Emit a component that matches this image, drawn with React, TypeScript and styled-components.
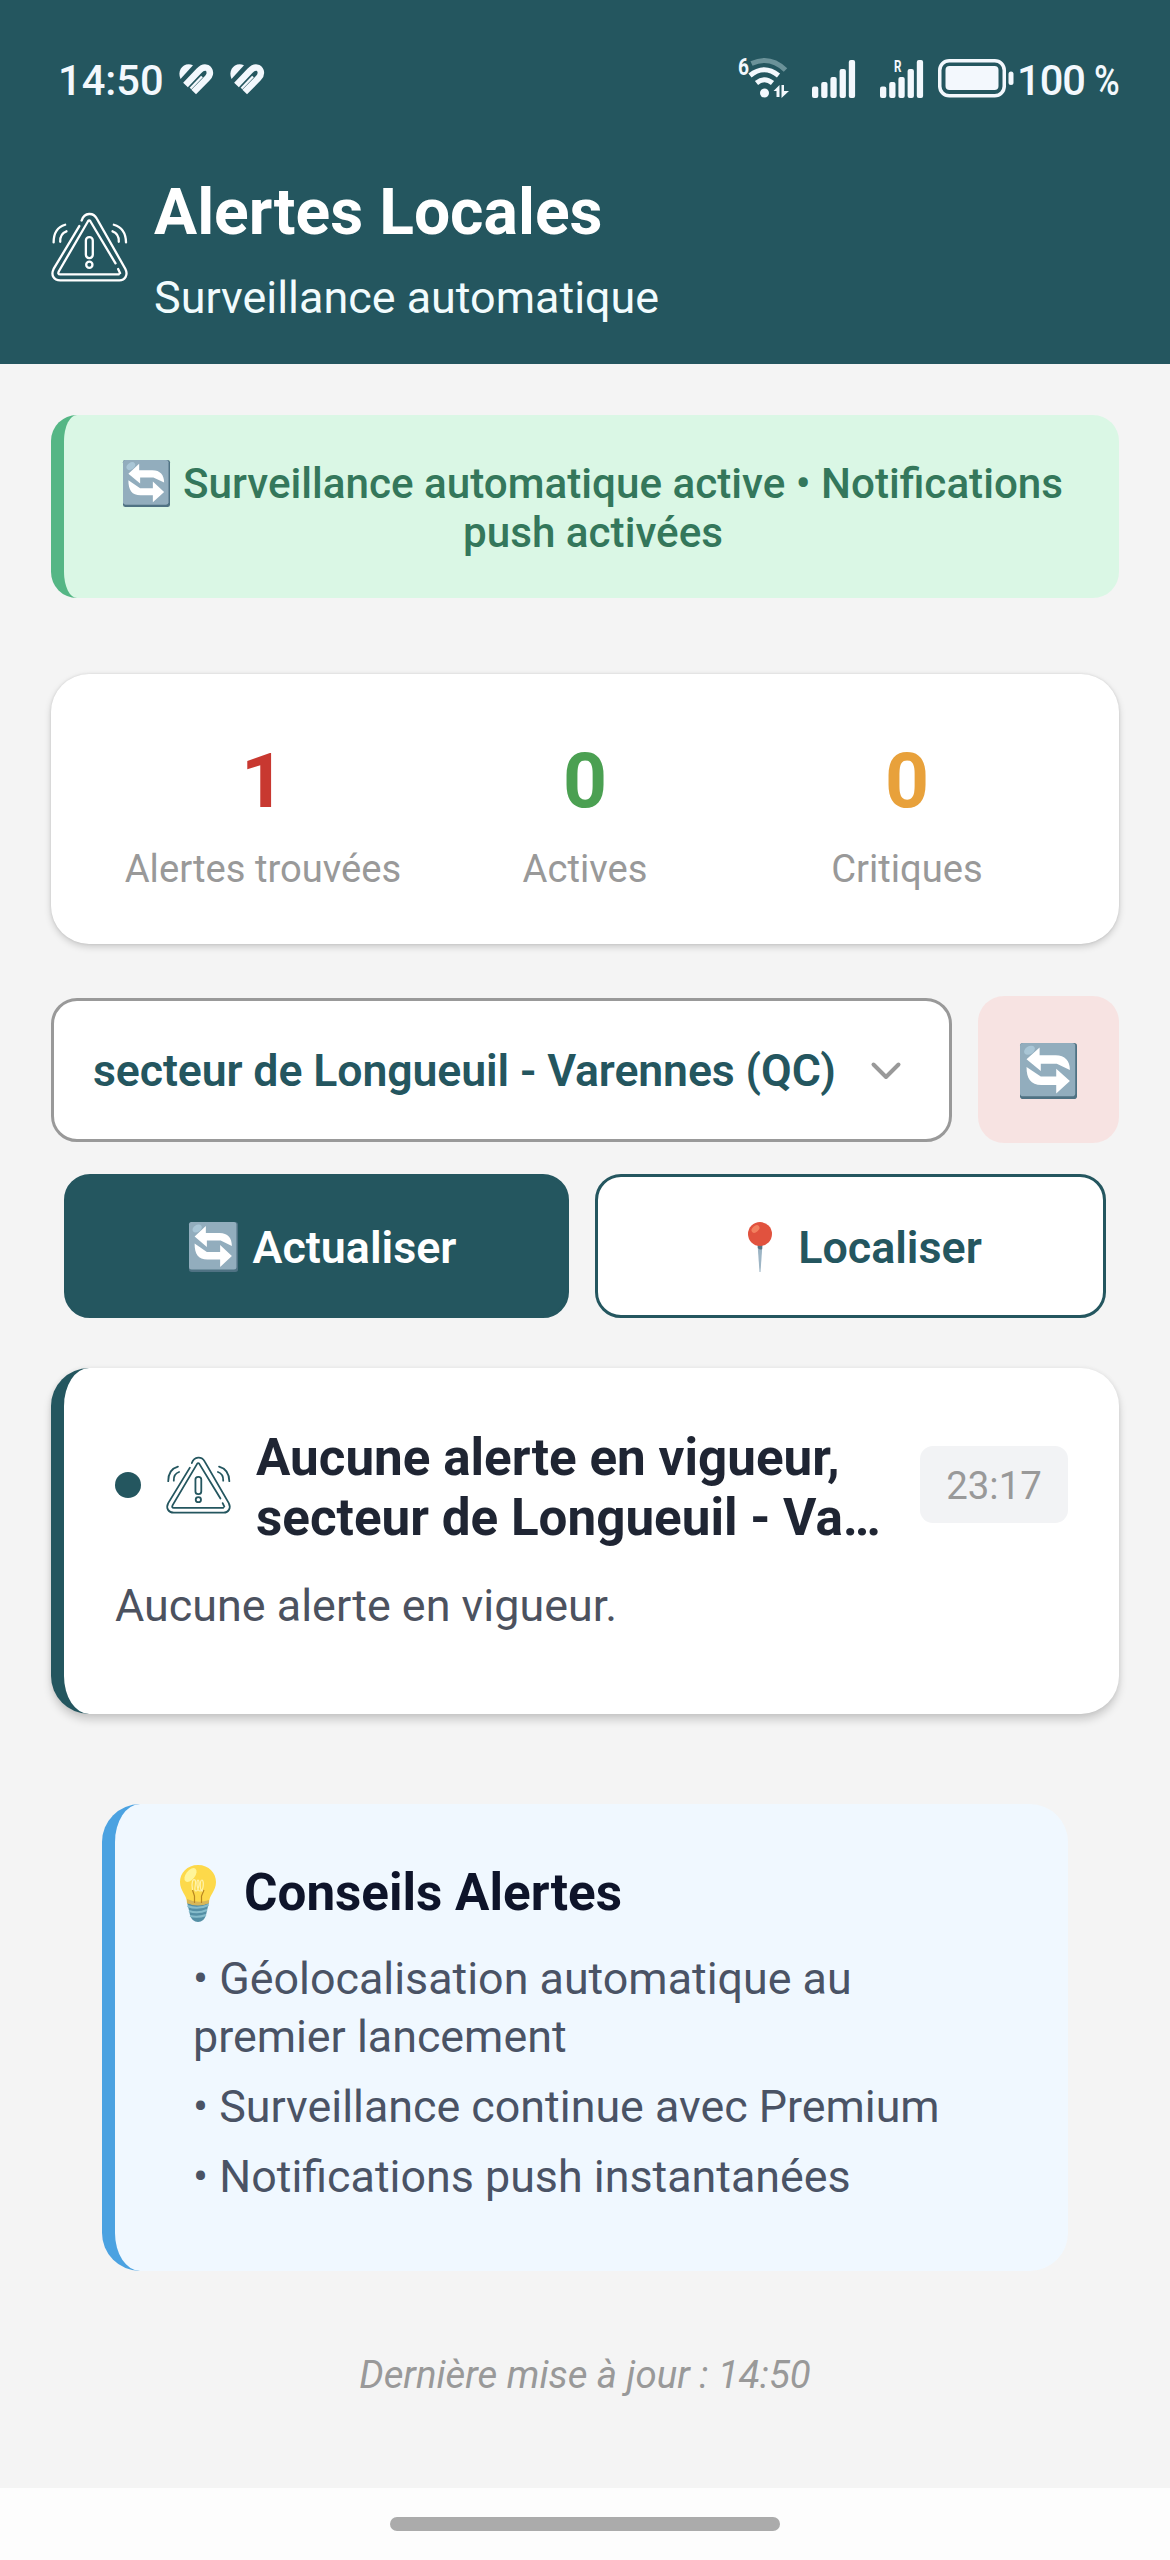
import React from 'react';
import styled, { createGlobalStyle } from 'styled-components';

const teal = '#24565f';

const GlobalStyle = createGlobalStyle`
  *, *::before, *::after { box-sizing: border-box; }
  html, body { margin: 0; padding: 0; }
  body { background: #f4f4f4; font-family: Roboto, 'Noto Sans', sans-serif; }
  p, h1, h2, ul { margin: 0; padding: 0; font-weight: inherit; }
  button { font-family: inherit; padding: 0; margin: 0; }
  svg { display: block; flex: none; overflow: visible; }
`;

const Screen = styled.div`
  width: 1170px;
  height: 2560px;
  display: flex;
  flex-direction: column;
  background: #f4f4f4;
  overflow: hidden;
`;

const Header = styled.header`
  height: 364px;
  flex: none;
  background: ${teal};
  color: #fff;
  display: flex;
  flex-direction: column;
`;

const StatusBar = styled.div`
  height: 160px;
  padding: 0 51px 0 58px;
  display: flex;
  justify-content: space-between;
  color: #f3f8fd;
`;

const StatusGroup = styled.div`
  display: flex;
  align-items: flex-start;
`;

const StatusText = styled.span<{ $ml?: number; $tight?: boolean }>`
  margin-top: 56px;
  margin-left: ${(p) => p.$ml ?? 0}px;
  font-size: 41.6px;
  line-height: 49px;
  font-weight: 500;
  letter-spacing: ${(p) => (p.$tight ? '-1px' : 'normal')};
  white-space: nowrap;
`;

const Percent = styled.span`
  display: inline-block;
  transform: scaleX(0.84);
  transform-origin: left;
  margin-right: -5px;
`;

const StatusIcon = styled.span<{ $ml: number; $mt: number }>`
  margin: ${(p) => p.$mt}px 0 0 ${(p) => p.$ml}px;
`;

const TitleRow = styled.div`
  display: flex;
  align-items: center;
  gap: 26px;
  padding: 15px 51px 0;
`;

const HeaderIcon = styled.span`
  margin-bottom: 6px;
`;

const TitleText = styled.div`
  display: flex;
  flex-direction: column;
  gap: 21px;
`;

const Title = styled.h1`
  font-size: 64.2px;
  line-height: 75px;
  font-weight: 700;
`;

const Subtitle = styled.p`
  font-size: 44.9px;
  line-height: 53px;
  color: #f1fbfd;
`;

const Main = styled.main`
  flex: 1;
  display: flex;
  flex-direction: column;
  padding: 51px 51px 0;
`;

const Banner = styled.div`
  height: 183px;
  padding: 44px 40px 0 43px;
  border-left: 13px solid #55b685;
  border-radius: 26px;
  background: #daf7e5;
  color: #34775b;
  font-size: 42.2px;
  line-height: 49px;
  font-weight: 500;
  text-align: center;
  white-space: nowrap;
  display: flex;
  flex-direction: column;
  align-items: center;
`;

const IconLine = styled.span<{ $gap: number }>`
  display: flex;
  align-items: center;
  gap: ${(p) => p.$gap}px;
`;

const Stats = styled.section`
  height: 270px;
  margin-top: 76px;
  padding: 0 51px;
  border-radius: 38px;
  background: #fff;
  box-shadow: 0 3px 7px rgba(0, 0, 0, 0.17), 0 0 3px rgba(0, 0, 0, 0.1);
  display: grid;
  grid-template-columns: repeat(3, 1fr);
`;

const Stat = styled.div`
  padding-top: 62px;
  display: flex;
  flex-direction: column;
  align-items: center;
  gap: 21px;
`;

const StatValue = styled.span<{ $color: string }>`
  font-size: 76.8px;
  line-height: 90px;
  font-weight: 700;
  color: ${(p) => p.$color};
`;

const StatLabel = styled.span`
  font-size: 38.2px;
  line-height: 45px;
  color: #999;
  white-space: nowrap;
`;

const SelectorRow = styled.div`
  margin-top: 52px;
  height: 147px;
  display: flex;
  align-items: center;
  gap: 26px;
`;

const Select = styled.button`
  flex: 1;
  height: 144px;
  padding: 3px 48px 0 39px;
  border: 3px solid #999;
  border-radius: 26px;
  background: #fff;
  color: ${teal};
  font-size: 44.6px;
  font-weight: 600;
  letter-spacing: -0.1px;
  white-space: nowrap;
  display: flex;
  align-items: center;
  justify-content: space-between;
`;

const RefreshButton = styled.button`
  width: 141px;
  height: 147px;
  border: 0;
  border-radius: 26px;
  padding-top: 3px;
  background: #f7e3e2;
  display: flex;
  align-items: center;
  justify-content: center;
`;

const Actions = styled.div`
  margin: 31px 13px 0;
  display: flex;
  gap: 26px;
`;

const ActionButton = styled.button<{ $outlined?: boolean }>`
  flex: none;
  width: ${(p) => (p.$outlined ? 511 : 505)}px;
  height: 144px;
  padding: 2px 0 0 ${(p) => (p.$outlined ? 29 : 12)}px;
  border: 3px solid ${teal};
  border-radius: 26px;
  background: ${(p) => (p.$outlined ? '#fff' : teal)};
  color: ${(p) => (p.$outlined ? teal : '#fff')};
  font-size: 44.8px;
  font-weight: 600;
  display: flex;
  align-items: center;
  justify-content: center;
  gap: ${(p) => (p.$outlined ? 26 : 15)}px;
`;

const AlertCard = styled.article`
  height: 346px;
  margin-top: 50px;
  padding: 53px 51px 0 51px;
  border-left: 13px solid ${teal};
  border-radius: 38px;
  background: #fff;
  box-shadow: 0 6px 9px rgba(0, 0, 0, 0.17), 0 0 5px rgba(0, 0, 0, 0.07);
`;

const AlertHead = styled.div`
  display: flex;
  align-items: center;
`;

const Dot = styled.span`
  width: 26px;
  height: 26px;
  border-radius: 50%;
  background: ${teal};
  margin-right: 25px;
`;

const AlertTitle = styled.h2`
  flex: 1;
  min-width: 0;
  margin-left: 25px;
  padding-top: 7px;
  font-size: 51.2px;
  line-height: 60px;
  font-weight: 700;
  color: #1f2533;
  white-space: nowrap;
`;

const TimeBadge = styled.span`
  height: 77px;
  width: 148px;
  border-radius: 13px;
  background: #f2f3f5;
  color: #999;
  font-size: 38.4px;
  line-height: 80px;
  text-align: center;
`;

const AlertBody = styled.p`
  margin-top: 29px;
  font-size: 44.9px;
  line-height: 58px;
  color: #4c525f;
`;

const Tips = styled.section`
  height: 467px;
  margin: 90px 51px 0;
  padding: 59px 51px 0 65px;
  border-left: 13px solid #4ba2e1;
  border-radius: 38px;
  background: #f0f8ff;
`;

const TipsTitle = styled.h2`
  font-size: 51.2px;
  line-height: 60px;
  font-weight: 700;
  color: #0e142a;
  display: flex;
  align-items: center;
  gap: 28px;
`;

const TipList = styled.ul`
  list-style: none;
  margin: 27px 0 0 13px;
  display: flex;
  flex-direction: column;
  gap: 12.8px;
`;

const Tip = styled.li`
  font-size: 44.8px;
  line-height: 57.6px;
  color: #4a5365;
`;

const Updated = styled.p`
  margin-top: 80px;
  text-align: center;
  font-size: 38.4px;
  line-height: 48px;
  font-style: italic;
  color: #999;
`;

const NavBar = styled.footer`
  height: 72px;
  flex: none;
  background: #fdfdfd;
  display: flex;
  justify-content: center;
  padding-top: 29px;
`;

const Handle = styled.span`
  width: 390px;
  height: 14px;
  border-radius: 7px;
  background: #ababab;
`;

const AlertIcon = ({ width, height, color, stroke = 7 }: { width: number; height: number; color: string; stroke?: number }) => (
  <svg width={width} height={height} viewBox="62 92 234 214" preserveAspectRatio="none" fill="none" stroke={color} strokeWidth={stroke} strokeLinecap="round">
    <path d="M155 118C164 92 191 93 201 112L288 266C297 284 287 301 270 301H90C70 301 61 284 70 266L148 135" />
    <path d="M272 279L266 266M258 249L182 121Q178 115 174 121L86 273Q81 283 90 283H268" />
    <path d="M105 131Q70 141 70 185M109 151Q89 158 90 183M253 131Q289 141 290 185M249 151Q269 158 268 183" />
    <rect x="168" y="169" width="21" height="64" rx="10" />
    <circle cx="178.500" cy="253" r="9.500" />
  </svg>
);

const RefreshGlyph = ({ width, height }: { width: number; height: number }) => (
  <svg width={width} height={height} viewBox="0 0 48 50" preserveAspectRatio="none">
    <rect width="48" height="50" rx="2.500" fill="#4f7283" />
    <rect width="46.500" height="47.500" rx="2.500" fill="#92adbd" />
    <ellipse cx="8" cy="6.500" rx="5" ry="3.500" transform="rotate(-35 8 6.500)" fill="#a9c6d6" />
    <path d="M5.500 14.500L16.500 4V11H30C38 11 42 16 42 24L31 18.500H17.500V25Z" fill="#fff" />
    <path d="M42 34L30.500 45V37.500H18C9 37.500 5.500 32 5.500 21.500L17.500 30H30.500V23Z" fill="#fff" />
  </svg>
);

const PinGlyph = () => (
  <svg width="24" height="50" viewBox="0 0 24 50">
    <path d="M9.500 22H14.500L12.500 50H11.500Z" fill="#9db5c5" />
    <path d="M9.800 23H14.200V27Q12 28.500 9.800 26Z" fill="#587485" />
    <circle cx="12" cy="12" r="12" fill="#e1523e" />
    <ellipse cx="7.500" cy="7" rx="4.500" ry="3" transform="rotate(-42 7.500 7)" fill="#f2805f" />
  </svg>
);

const BulbGlyph = () => (
  <svg width="36" height="57" viewBox="0 0 36 57">
    <path d="M7 37H29L26 50Q24 57 18 57Q12 57 10 50Z" fill="#548fa5" />
    <path d="M7.500 41Q18 45 28.500 40M9 46Q18 49 27 45M10 51Q18 53 26 50" stroke="#86bccb" strokeWidth="2" fill="none" />
    <path d="M18 0C7 0 0 8 0 17C0 26 7 30 7 38Q18 42 29 38C29 30 36 26 36 17C36 8 29 0 18 0Z" fill="#fdd94a" />
    <path d="M7 34Q18 39 29 35V38Q18 43 7 38Z" fill="#d7b658" />
    <ellipse cx="10.500" cy="10" rx="4.500" ry="8" transform="rotate(38 10.500 10)" fill="#fff59a" />
    <path d="M14.500 38V31L12.500 25M21.500 38V31L24 25" stroke="#b98620" strokeWidth="1.200" fill="none" />
    <path d="M12.500 25C11 18 13 13 15 15C17 17 13 26 16 26C19 26 20 15 18 15C16 15 17 26 20 26C24 26 24 15 22 15C20 15 19 26 23 26" stroke="#fff3ad" strokeWidth="1.200" fill="none" />
  </svg>
);

const HeartGlyph = () => (
  <svg width="35" height="31" viewBox="0 0 35 31" fill="none" stroke="#f3f8fd">
    <path d="M1.500 15C-2.500 6 5-2.500 14 1.300Z" fill="#f3f8fd" stroke="none" />
    <path d="M6.500 21L20 6.800C25 1.500 29.500 3.500 30.600 7C31.500 10 30.500 12 28.500 14L14.700 28" strokeWidth="6.500" />
    <path d="M11.500 24.500L23 12.500" strokeWidth="2.500" />
  </svg>
);

const WifiGlyph = () => (
  <svg width="52" height="43" viewBox="0 0 52 43" fill="none" stroke="#f3f8fd">
    <path d="M13.500 6.500Q32-2 47.500 13" stroke="#6b9299" strokeWidth="5" />
    <path d="M12 18.500Q26 7 40.500 18.500" strokeWidth="5" />
    <path d="M18.500 26Q26.500 19.500 34.500 26" strokeWidth="5" />
    <circle cx="26.500" cy="36" r="4.500" fill="#f3f8fd" stroke="none" />
    <path d="M35.500 34L41.500 28V40H38.500V34ZM43.500 28H46V34H51L43.500 41Z" fill="#f3f8fd" stroke="none" />
    <text x="0" y="17.500" fontSize="23" fontWeight="700" fontFamily="Roboto, sans-serif" textLength="11" lengthAdjust="spacingAndGlyphs" fill="#f3f8fd" stroke="none">6</text>
  </svg>
);

const bars = [11.5, 16, 21, 29, 38];

const SignalGlyph = ({ roaming }: { roaming?: boolean }) => (
  <svg width="44" height="39" viewBox="0 0 44 39" fill="#f3f8fd">
    {bars.map((h, i) => (
      <rect key={h} x={i * 9.2} y={38 - h} width="6.300" height={h} rx="2" />
    ))}
    {roaming && (
      <text x="14" y="11.500" fontSize="16.500" fontWeight="700" fontFamily="Roboto, sans-serif" textLength="7.500" lengthAdjust="spacingAndGlyphs">R</text>
    )}
  </svg>
);

const BatteryGlyph = () => (
  <svg width="76" height="39" viewBox="0 0 76 39" fill="none">
    <rect x="1.750" y="1.750" width="64.500" height="35" rx="9.500" stroke="#f3f8fd" strokeWidth="3.500" />
    <rect x="7.500" y="7" width="53" height="24" rx="4" fill="#f3f8fd" />
    <rect x="70.500" y="12.500" width="5" height="13.500" rx="2.500" fill="#f3f8fd" />
  </svg>
);

const stats = [
  { value: 1, label: 'Alertes trouvées', color: '#c83830' },
  { value: 0, label: 'Actives', color: '#4ba052' },
  { value: 0, label: 'Critiques', color: '#e8a13b' },
];

export default function App() {
  return (
    <Screen>
      <GlobalStyle />
      <Header>
        <StatusBar>
          <StatusGroup>
            <StatusText>14:50</StatusText>
            <StatusIcon $ml={15} $mt={64}><HeartGlyph /></StatusIcon>
            <StatusIcon $ml={16} $mt={64}><HeartGlyph /></StatusIcon>
          </StatusGroup>
          <StatusGroup>
            <StatusIcon $ml={0} $mt={57}><WifiGlyph /></StatusIcon>
            <StatusIcon $ml={22} $mt={60}><SignalGlyph /></StatusIcon>
            <StatusIcon $ml={24} $mt={60}><SignalGlyph roaming /></StatusIcon>
            <StatusIcon $ml={14} $mt={59}><BatteryGlyph /></StatusIcon>
            <StatusText $ml={3} $tight>100 <Percent>%</Percent></StatusText>
          </StatusGroup>
        </StatusBar>
        <TitleRow>
          <HeaderIcon><AlertIcon width={77} height={70} color="#fff" /></HeaderIcon>
          <TitleText>
            <Title>Alertes Locales</Title>
            <Subtitle>Surveillance automatique</Subtitle>
          </TitleText>
        </TitleRow>
      </Header>
      <Main>
        <Banner>
          <IconLine $gap={13}>
            <RefreshGlyph width={47} height={47} />
            <span>Surveillance automatique active • Notifications</span>
          </IconLine>
          <span>push activées</span>
        </Banner>
        <Stats>
          {stats.map((s) => (
            <Stat key={s.label}>
              <StatValue $color={s.color}>{s.value}</StatValue>
              <StatLabel>{s.label}</StatLabel>
            </Stat>
          ))}
        </Stats>
        <SelectorRow>
          <Select>
            <span>secteur de Longueuil - Varennes (QC)</span>
            <svg width="30" height="18" viewBox="0 0 30 18" fill="none" stroke="#999" strokeWidth="4" strokeLinecap="round" strokeLinejoin="round">
              <path d="M2.500 2.500L15 15L27.500 2.500" />
            </svg>
          </Select>
          <RefreshButton><RefreshGlyph width={57} height={56} /></RefreshButton>
        </SelectorRow>
        <Actions>
          <ActionButton>
            <RefreshGlyph width={49} height={50} />
            <span>Actualiser</span>
          </ActionButton>
          <ActionButton $outlined>
            <PinGlyph />
            <span>Localiser</span>
          </ActionButton>
        </Actions>
        <AlertCard>
          <AlertHead>
            <Dot />
            <AlertIcon width={65} height={58} color={teal} stroke={6.5} />
            <AlertTitle>
              Aucune alerte en vigueur,
              <br />
              secteur de Longueuil - Va…
            </AlertTitle>
            <TimeBadge>23:17</TimeBadge>
          </AlertHead>
          <AlertBody>Aucune alerte en vigueur.</AlertBody>
        </AlertCard>
        <Tips>
          <TipsTitle>
            <BulbGlyph />
            <span>Conseils Alertes</span>
          </TipsTitle>
          <TipList>
            <Tip>
              • Géolocalisation automatique au
              <br />
              premier lancement
            </Tip>
            <Tip>• Surveillance continue avec Premium</Tip>
            <Tip>• Notifications push instantanées</Tip>
          </TipList>
        </Tips>
        <Updated>Dernière mise à jour : 14:50</Updated>
      </Main>
      <NavBar><Handle /></NavBar>
    </Screen>
  );
}
